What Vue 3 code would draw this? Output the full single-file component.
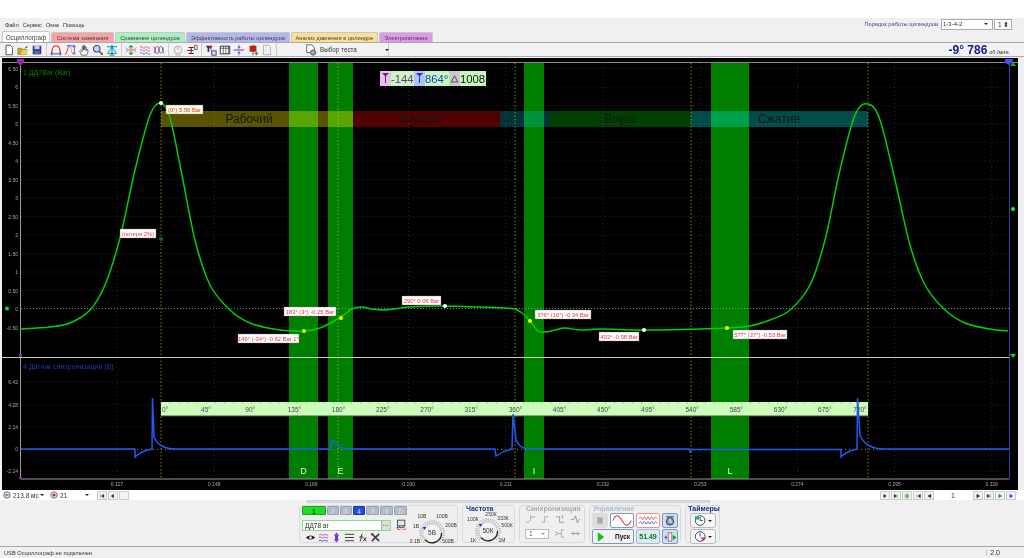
<script setup>
const curvePts = [[21,329],[50,327],[70,323],[90,310],[105,285],[120,238],[135,170],[150,115],[161,103],[170,118],[180,165],[195,240],[210,285],[230,310],[250,323],[280,330],[304,331],[320,328],[341,317],[352,309],[362,307],[372,309],[385,310],[410,307],[445,306],[480,307],[505,308],[515,309],[522,313],[530,321],[538,331],[545,332],[555,330],[565,328],[580,330],[600,329],[644,330],[700,329],[727,328],[750,326],[770,320],[790,310],[810,285],[825,240],[840,170],[855,115],[868,104],[880,120],[895,180],[910,245],[925,285],[945,310],[965,323],[990,329],[1008,331]]
function smooth(p) {
  let d = `M${p[0][0]} ${p[0][1]}`
  for (let i = 0; i < p.length - 1; i++) {
    const a = p[Math.max(i - 1, 0)], b = p[i], c = p[i + 1], e = p[Math.min(i + 2, p.length - 1)]
    d += ` C${(b[0] + (c[0] - a[0]) / 6).toFixed(1)} ${(b[1] + (c[1] - a[1]) / 6).toFixed(1)} ${(c[0] - (e[0] - b[0]) / 6).toFixed(1)} ${(c[1] - (e[1] - b[1]) / 6).toFixed(1)} ${c[0]} ${c[1]}`
  }
  return d
}
const greenPath = smooth(curvePts)
const bluePath = 'M21 449H135V457Q141 451 152 449L152.5 398L154 437Q157 444 162 446Q167 449 176 449H331L332 440Q337 446 345 449H495L496 456Q503 451 512 449L513 414L516 440Q519 447 526 449H689L690 452L692 449.5H841V457Q847 451 857 449L857.5 398L860 435Q864 444 870 446Q875 449 884 449H1009'

const bands = [[289,29,'D'],[328,25,'E'],[524,20,'I'],[711,38,'L']]
const strokes = [
  { x:161, w:192, c:'#ffec00', o:.35 },
  { x:353, w:147, c:'#e00000', o:.36 },
  { x:500, w:49, c:'#00c8e0', o:.26 },
  { x:549, w:142, c:'#00d000', o:.3 },
  { x:691, w:177, c:'#00e0d8', o:.34 }
]
const strokeLabels = [['Рабочий',249],['Выпуск',420],['Впуск',620],['Сжатие',779]]
const yTop = [['6.50',68.5],['6',87],['5.50',105.5],['5',124],['4.50',142.5],['4',161],['3.50',179.5],['3',198],['2.50',216.5],['2',235],['1.50',253.5],['1',272],['0.50',290.5],['0',309],['-0.50',327.5]]
const yBot = [['6.42',382],['4.28',405],['2.14',427],['0',449],['-2.14',471]]
const times = ['0.127','0.148','0.169','0.190','0.211','0.232','0.253','0.274','0.295','0.316'].map((t,i)=>[t,117+97.2*i])
const yellow = [161,338,515,691,868]
const degs = Array.from({length:15},(_,i)=>[`${45*(i+1)}°`,206+44.2*i])
const minor = Array.from({length:78},(_,i)=>161+9.07*i)
const notes = [
  ['(0°) 5.56 Bar',166,105,37,'#fffde0'],['(потери 2%)',120,229,36,'#fff'],['183° (3°) -0.25 Bar',284,307,52,'#fff'],
  ['146° (-34°) -0.62 Bar 1°',238,334,61,'#fff'],['290° 0.06 Bar',402,296,39,'#fff'],['376° (16°) -0.34 Bar',535,310,56,'#fff'],
  ['493° -0.58 Bar',599,332,40,'#fff'],['577° (37°) -0.53 Bar',733,330,54,'#fff']
]
const dots = [[161,103,'#fff'],[161,239,'#0a6a0a'],[304,331,'#ff0'],[341,318,'#ff0'],[445,306,'#fff'],[530,321,'#ff0'],[644,330,'#fff'],[727,328,'#ff0']]

const tabs = [['Осциллограф','#fff',48],['Система зажигания','#f5a3a3',63],['Сравнение цилиндров','#a9efc0',70],['Эффективность работы цилиндров','#b3b5ef',104],['Анализ давления в цилиндре','#fbdf95',87],['Электропитание','#df98ee',54]]

const toolGroups = [
 ['<path d="M3.5 1.5h5l2.5 2.5v8.500h-7.500z" fill="#fff" stroke="#444"/>',
  '<path d="M1 5h4l1 1h5v6H1z" fill="#c9a227" stroke="#7a6000" stroke-width=".6"/><path d="M4 12l2-5h7l-2 5z" fill="#ecd060"/><path d="M9 5l2-3 1.500 2.500z" fill="#20a020"/>',
  '<path d="M2 2h10v10H2z" fill="#2b3f8f"/><path d="M4 2h6v4H4z" fill="#c8d0e8"/><path d="M4 8h6v4H4z" fill="#5b6aa8"/>'],
 ['<path d="M2 11C2 5 4 2 7 2s5 3 5 9" fill="none" stroke="#e01818" stroke-width="1.200"/><path d="M1 11.500h12M1 11.500l2-1.500M1 11.500l2 1.500M13 11.500l-2-1.500M13 11.500l-2 1.500" stroke="#1838c8" fill="none"/>',
  '<path d="M1 12C4 12 4 2 7 2" fill="none" stroke="#e01818"/><path d="M7 2c2 0 1 10 4 10" fill="none" stroke="#f09090"/><path d="M12 2v10M3 2h9M10 4l2-2 2 2M10 10l2 2 2-2" stroke="#1838c8" fill="none" stroke-width=".8"/>',
  '<path d="M4 13L2 8l1-1 2 2V2.500h1.500V7V2h1.500v5-3.500h1.500V8l1-2 1 .5V10l-1.500 3z" fill="#fff" stroke="#333" stroke-width=".8"/>',
  '<circle cx="5.500" cy="5.500" r="3.800" fill="#bcd8f5" stroke="#3a4f8a" stroke-width="1.300"/><path d="M8.500 8.500l4 4" stroke="#7a5a20" stroke-width="2"/>',
  '<path d="M1 3h12M1 11h12" stroke="#1fb0a0" stroke-width="1.400"/><path d="M2 9C5 9 5 4 7 4s2 5 5 5" fill="none" stroke="#18c8d8" stroke-width="1.300"/><path d="M7 1v12" stroke="#1838c8"/><path d="M4 13h6" stroke="#20c020" stroke-width="1.300"/>'],
 ['<path d="M7 1l3 3H4zM7 13l3-3H4z" fill="#309030"/><path d="M2 7h10" stroke="#e05050"/><circle cx="7" cy="7" r="2.500" fill="#e8a0a0"/><path d="M1 4l2 3-2 3M13 4l-2 3 2 3" stroke="#80a0c0" fill="none"/>',
  '<path d="M1 4c2-3 4 3 6 0s4 3 6 0M1 7.500c2-3 4 3 6 0s4 3 6 0" fill="none" stroke="#e04040"/><path d="M1 11c2-3 4 3 6 0s4 3 6 0" fill="none" stroke="#3060e0"/>',
  '<path d="M2 11C2 1 7 1 7 7s5 4 5-3" fill="none" stroke="#e04040" stroke-width="1.100"/><path d="M2 3c0 10 5 10 5 4s5-6 5 4" fill="none" stroke="#3060e0" stroke-width="1.100"/>'],
 ['<circle cx="7" cy="7" r="4.500" fill="#eee" stroke="#aaa"/><path d="M4 13h6M7 2v5" stroke="#aaa"/>',
  '<path d="M6 4v7M3 4h6M3 11h6" stroke="#a00" stroke-width="1.200"/><path d="M1 7.500h8" stroke="#333"/><path d="M10 1.500h3v5h-3z" fill="none" stroke="#333" stroke-width=".8"/>'],
 ['<path d="M1 2l6 0-2 3v4H3V5z" fill="#1b2f9f"/><path d="M5 2h4l-1.500 3v4" fill="#d02020"/><rect x="8" y="8" width="5" height="5" fill="#dde" stroke="#1b2f9f"/>',
  '<path d="M1.500 2.500h11v9h-11z" fill="#fff" stroke="#222"/><path d="M1.500 5h11M5 2.500v9M8 2.500v9M11 2.500v9" stroke="#222" stroke-width=".7"/>',
  '<path d="M1 7h12" stroke="#808"/><path d="M7 1v4M5.500 3.500L7 5l1.500-1.500M7 13V9M5.500 10.500L7 9l1.500 1.500" stroke="#205090" fill="none"/>',
  '<path d="M3 2h8v7H3z" fill="#d81818"/><path d="M7 1v12" stroke="#444"/><path d="M9 11h4M11 9v4" stroke="#20a020" stroke-width="1.400"/>',
  '<path d="M3 1.500h6l2 2v9H3z" fill="#f4f4f4" stroke="#aaa"/><path d="M6 3.500v7" stroke="#ccc" stroke-dasharray="1 1"/>']
]
const chanBtns = [['1','on',24],['2','',12],['3','',12],['4','blue',13],['5','',13],['6','',13],['D','',13]]
const chanIcons = [
 '<path d="M1 6c3-3 7-3 10 0-3 3-7 3-10 0z" fill="#222"/><circle cx="6" cy="6" r="1.500" fill="#fff"/>',
 '<path d="M1 3c2-2 3 2 5 0s3 2 5 0M1 6c2-2 3 2 5 0s3 2 5 0" fill="none" stroke="#d040c0"/><path d="M1 9.500c2-2 3 2 5 0s3 2 5 0" fill="none" stroke="#3050d0"/>',
 '<path d="M6 .5l3 3.500H3zM6 11.500L3 8h6z" fill="#b020c0"/><path d="M4.500 4h3v4h-3z" fill="#2040d0"/>',
 '<path d="M1 2.500h10M1 6h10M1 9.500h10" stroke="#333"/>',
 '<path d="M6 2C4 2 5 10 3 10M2.500 5.500h4M7 6l3 4M10 6l-3 4" fill="none" stroke="#222"/>',
 '<path d="M2 2l8 8M10 2L2 10" stroke="#345" stroke-width="1.800"/><circle cx="2.500" cy="2.500" r="1.500" fill="#a33"/>'
]
const syncIcons = [
 '<path d="M1 9h3c2 0 2-6 4-6h3M6 1v4" fill="none" stroke="#aaa"/>',
 '<path d="M2 9h3V3h4" fill="none" stroke="#aaa"/><path d="M8 8l2 2" stroke="#ccc"/>',
 '<path d="M1 3h4v6h5M8 1v4" fill="none" stroke="#999"/>',
 '<path d="M1 6h3l2-4 2 8 2-4h1" fill="none" stroke="#999"/>',
 '<path d="M1 4l4 2-4 2M5 6h3M8 2h3M8 10h3M8 2v8" fill="none" stroke="#aaa"/>',
 '<path d="M1 6h10M3 4l2 2-2 2M9 4L7 6l2 2" fill="none" stroke="#999"/>'
]
const ticks = (cx, cy, r, n) => Array.from({ length: n }, (_, i) => {
  const a = (135 + 270 * i / (n - 1)) * Math.PI / 180
  return `M${(cx + r * Math.cos(a)).toFixed(1)} ${(cy + r * Math.sin(a)).toFixed(1)}L${(cx + (r + 2.5) * Math.cos(a)).toFixed(1)} ${(cy + (r + 2.5) * Math.sin(a)).toFixed(1)}`
}).join('')
const knobA = ticks(25, 27, 10.5, 25)
const knobB = ticks(26, 26, 10.5, 25)
const navL = ['M2 2v6M4 5l4-3v6z','M2 5l4-3v6z']
const navR = [['M3 2l4 3-4 3z','#222'],['M2 2l4 3-4 3zM7 2v6','#222'],['C','#2a2'],['M3 2v6M9 2L5 5l4 3z','#222'],['M8 2L3 5l5 3z','#222']]
const navR2 = [['M3 2l5 3-5 3z','#222'],['M2 2l4 3-4 3zM7 2v6','#222'],['M3 2l5 3-5 3z','#0a9a0a'],['M3 2l5 3-5 3z','#1040f0']]
</script>

<template>
  <div class="app">
    <div class="blank"></div>
    <div class="menubar">
      <div class="menu"><span>Файл</span><span>Сервис</span><span>Окна</span><span>Помощь</span></div>
      <div class="order">
        <span class="order-label">Порядок работы цилиндров</span>
        <div class="sel"><span>1-3-4-2</span><i class="caret"></i></div>
        <div class="spin"><span>1</span><b>⬍</b></div>
      </div>
    </div>
    <div class="tabs">
      <div v-for="(t,i) in tabs" :key="t[0]" class="tab" :class="{active:i===0}" :style="{background:t[1],width:t[2]+'px'}">{{ t[0] }}</div>
    </div>
    <div class="toolbar">
      <div v-for="(g,gi) in toolGroups" :key="gi" class="tgroup">
        <svg v-for="(ic,i) in g" :key="i" class="ti" viewBox="0 0 14 14" v-html="ic"></svg>
      </div>
      <div class="testsel">
        <svg class="ti doc" viewBox="0 0 14 14"><path d="M2 1h6l3 3v6H2z" fill="#fff" stroke="#555"/><circle cx="9.500" cy="10" r="3" fill="#aaa" stroke="#444"/></svg>
        <span>Выбор теста</span><i class="caret"></i>
      </div>
      <div class="rpm"><b>-9° 786</b><small>об./мин.</small></div>
    </div>

    <svg class="plot" viewBox="0 57 1024 433" width="1024" height="433">
      <rect x="0" y="57" width="1024" height="433" fill="#f0f0f0"/>
      <rect x="2" y="58" width="1016" height="432" fill="#000"/>
      <g stroke="#3a3a3a" stroke-width=".7" stroke-dasharray="1 3">
        <line v-for="t in times" :key="t[0]" :x1="t[1]" :x2="t[1]" y1="63" y2="479"/>
        <line v-for="y in yTop" :key="y[0]" x1="21" x2="1009" :y1="y[1]" :y2="y[1]"/>
        <line v-for="y in yBot" :key="y[0]" x1="21" x2="1009" :y1="y[1]" :y2="y[1]"/>
      </g>
      <rect v-for="b in bands" :key="b[2]" :x="b[0]" y="63" :width="b[1]" height="416" fill="#007e00"/>
      <rect v-for="s in strokes" :key="s.x" :x="s.x" y="111" :width="s.w" height="16" :fill="s.c" :fill-opacity="s.o"/>
      <text v-for="s in strokeLabels" :key="s[0]" :x="s[1]" y="123" class="stroke">{{ s[0] }}</text>
      <line x1="21" x2="1009" y1="308.500" y2="308.500" stroke="#9a9a9a" stroke-width=".8" stroke-dasharray="1 2"/>
      <line v-for="x in yellow" :key="x" :x1="x" :x2="x" y1="63" y2="479" stroke="#b8b820" stroke-width=".7" stroke-dasharray="1.500 2"/>
      <rect x="2" y="62" width="1016" height="1" fill="#888"/>
      <rect x="2" y="357" width="1007" height="1" fill="#c8c8c8"/>
      <path d="M20.500 63V479H1009" fill="none" stroke="#9a9a9a"/>
      <rect x="1009" y="63" width="1" height="416" fill="#3838b0"/>
      <path d="M17 59h7v3l-3.500 4-3.500-4z" fill="#a020b0"/>
      <path d="M1005 59h8v2l-4 4-4-2z" fill="#4848ff"/>
      <path d="M1010 66l3-4 3 4z" fill="#00c000"/>
      <path d="M1010 354h6l-3 4z" fill="#00e000"/>
      <circle cx="1013" cy="209" r="2" fill="#00ff30"/>
      <circle cx="7" cy="308.500" r="2" fill="#00e040"/>
      <path d="M19 477h3v2h-3z" fill="#a020b0"/>
      <path d="M19 354h3v3h-3z" fill="#a020b0"/>

      <text v-for="y in yTop" :key="y[0]" x="18" :y="y[1]+2" class="axis" text-anchor="end">{{ y[0] }}</text>
      <text v-for="y in yBot" :key="y[0]" x="18" :y="y[1]+2" class="axis" text-anchor="end">{{ y[0] }}</text>
      <text v-for="t in times" :key="t[0]" :x="t[1]" y="486" class="axis" text-anchor="middle">{{ t[0] }}</text>
      <text x="23" y="74.500" class="ch ch1">1 ДД7Bar (Bar)</text>
      <text x="23" y="369" class="ch ch4">4 Датчик синхронизации (В)</text>

      <rect x="161" y="402" width="707" height="14" fill="#ccfdba"/>
      <line x1="161" x2="868" y1="416" y2="416" stroke="#3d5a3d"/>
      <line v-for="x in minor" :key="x" :x1="x" :x2="x" y1="402" y2="404" stroke="#8aa080" stroke-width=".5"/>
      <text x="162" y="412" class="deg">0°</text>
      <text v-for="d in degs" :key="d[0]" :x="d[1]" y="412" class="deg" text-anchor="middle">{{ d[0] }}</text>
      <text x="860" y="412" class="deg" text-anchor="middle">720°</text>

      <text v-for="b in bands" :key="b[2]" :x="b[0]+b[1]/2" y="473.500" class="bandl">{{ b[2] }}</text>
      <line x1="21" x2="1009" y1="449.500" y2="449.500" stroke="#cfd8ff" stroke-width=".5" stroke-dasharray="1 3"/>
      <path :d="bluePath" fill="none" stroke="#1f5af0" stroke-width="1.500"/>
      <path :d="greenPath" fill="none" stroke="#00d000" stroke-width="1.500"/>

      <circle v-for="d in dots" :key="d[0]+'-'+d[1]" :cx="d[0]" :cy="d[1]" r="2" :fill="d[2]"/>
      <g v-for="n in notes" :key="n[0]">
        <rect :x="n[1]" :y="n[2]" :width="n[3]" height="9" :fill="n[4]" stroke="#777" stroke-width=".4"/>
        <text :x="n[1]+n[3]/2" :y="n[2]+6.800" class="note" text-anchor="middle">{{ n[0] }}</text>
      </g>

      <rect x="380" y="71" width="106" height="15" fill="#c8f5c0"/>
      <rect x="380" y="71" width="11" height="15" fill="#e3c3e6"/>
      <rect x="414" y="71" width="11" height="15" fill="#b4c0fa"/>
      <rect x="449" y="71" width="11" height="15" fill="#c9c9c9"/>
      <path d="M382 73h7l-3 3v7h-1v-7z" fill="#7a1a8a"/>
      <path d="M416 73h7l-3 3v7h-1v-7z" fill="#1a3ab8"/>
      <path d="M454.500 75l4 7.500h-8zM454.500 77l-2.500 4.500h5z" fill-rule="evenodd" fill="#555"/>
      <text x="391" y="83" class="cur" fill="#7b2d8b">-144</text>
      <text x="425" y="83" class="cur" fill="#1a3cc0">864°</text>
      <text x="460" y="83" class="cur" fill="#111">1008</text>
    </svg>

    <div class="nav">
      <div class="nav-left">
        <svg class="nv" viewBox="0 0 10 10"><circle cx="5" cy="5" r="4" fill="#dde" stroke="#556"/><path d="M3 5h4" stroke="#226"/></svg>
        <span class="val w1">213.8 мс</span><i class="caret"></i>
        <svg class="nv rec" viewBox="0 0 10 10"><circle cx="5" cy="5" r="4" fill="#eee" stroke="#556"/><circle cx="5" cy="5" r="2" fill="#c22"/></svg>
        <span class="val w2">21</span><i class="caret"></i>
        <button v-for="p in navL" :key="p" class="nb"><svg viewBox="0 0 10 10"><path :d="p" fill="#222" stroke="#222" stroke-width=".6"/></svg></button>
        <button class="nb"></button>
      </div>
      <div class="nav-right">
        <template v-for="(p,i) in navR" :key="i">
          <button class="nb"><svg viewBox="0 0 10 10"><circle v-if="p[0]==='C'" cx="5" cy="5" r="3.500" fill="#dfd" stroke="#282"/><circle v-if="p[0]==='C'" cx="5" cy="5" r="1.800" fill="#2a2"/><path v-else :d="p[0]" :fill="p[1]" :stroke="p[1]" stroke-width=".6"/></svg></button>
        </template>
        <span class="page">1</span>
        <button v-for="(p,i) in navR2" :key="'r'+i" class="nb"><svg viewBox="0 0 10 10"><path :d="p[0]" :fill="p[1]" :stroke="p[1]" stroke-width=".6"/></svg></button>
      </div>
    </div>

    <div class="panel">
      <div class="slider"><i></i><i class="end"></i></div>
      <div class="groups">
        <div class="group g1">
          <div class="g1-left">
            <div class="chans">
              <div v-for="c in chanBtns" :key="c[0]" class="chan" :class="c[1]" :style="{width:c[2]+'px'}">{{ c[0] }}</div>
            </div>
            <div class="inrow">
              <div class="input"><span>ДД78 ar</span><i>…</i></div>
              <svg class="ico" viewBox="0 0 14 14"><rect x="2" y="1" width="9" height="7" fill="#e6e6e6" stroke="#333"/><path d="M4 8v2h6V8" stroke="#333" fill="none"/><path d="M1 11c2 2 3 2 5 1M13 11c-2 2-3 2-5 1" stroke="#d02020" fill="none"/><circle cx="2" cy="10" r="1.200" fill="#2040d0"/></svg>
            </div>
            <div class="chicons">
              <svg v-for="(ic,i) in chanIcons" :key="i" class="cico" viewBox="0 0 12 12" v-html="ic"></svg>
            </div>
          </div>
          <svg class="knob" viewBox="0 0 50 38" width="50" height="38">
            <path :d="knobA" stroke="#888" stroke-width=".6"/>
            <circle cx="25" cy="27" r="9.500" fill="#f3f3f3" stroke="#ccc" stroke-width="1.500"/>
            <path d="M18 33.700A9.500 9.500 0 0 0 34.500 27" fill="none" stroke="#222" stroke-width="1.200"/>
            <path d="M15.500 21h4l-2 3z" fill="#2040e0"/>
            <text x="25" y="29" text-anchor="middle" class="kv">5В</text>
            <text x="15" y="12" text-anchor="middle">10В</text><text x="35" y="12" text-anchor="middle">100В</text>
            <text x="9" y="22" text-anchor="middle">1В</text><text x="44" y="21" text-anchor="middle">200В</text>
            <text x="8" y="37" text-anchor="middle">0.1В</text><text x="41" y="37" text-anchor="middle">500В</text>
          </svg>
        </div>
        <div class="group g2">
          <div class="title blue">Частота</div>
          <svg class="knob over" viewBox="0 0 53 38" width="53" height="38">
            <path :d="knobB" stroke="#888" stroke-width=".6"/>
            <circle cx="26" cy="26" r="9.500" fill="#f3f3f3" stroke="#ccc" stroke-width="1.500"/>
            <path d="M19 32.700A9.500 9.500 0 0 0 35.500 26" fill="none" stroke="#222" stroke-width="1.200"/>
            <path d="M16.500 19h4l-2 3z" fill="#2040e0"/>
            <text x="26" y="28" text-anchor="middle" class="kv">50К</text>
            <text x="29" y="11" text-anchor="middle">250К</text><text x="11" y="16" text-anchor="middle">100К</text>
            <text x="41" y="15" text-anchor="middle">333К</text><text x="45" y="22" text-anchor="middle">500К</text>
            <text x="11" y="37" text-anchor="middle">1К</text><text x="40" y="37" text-anchor="middle">1М</text>
          </svg>
        </div>
        <div class="group g3">
          <div class="title gray">Синхронизация</div>
          <div class="syncs">
            <svg v-for="i in 4" :key="i" class="sic" viewBox="0 0 12 12" v-html="syncIcons[i-1]"></svg>
          </div>
          <div class="syncs second">
            <div class="mini"><span>1</span><i class="caret light"></i></div>
            <svg class="sic" viewBox="0 0 12 12" v-html="syncIcons[4]"></svg>
            <svg class="sic" viewBox="0 0 12 12" v-html="syncIcons[5]"></svg>
          </div>
        </div>
        <div class="group g4">
          <div class="title pale">Управление</div>
          <div class="ctl">
            <div class="cb pause"><svg viewBox="0 0 12 12"><path d="M4 2.500v7M6 2.500v7M8 2.500v7" stroke="#777"/></svg></div>
            <div class="cb sine"><svg viewBox="0 0 22 12"><path d="M1 6C4-1 7-1 11 6s7 7 10 0" fill="none" stroke="#e03030" stroke-width="1.100"/></svg></div>
            <div class="cb zig"><svg viewBox="0 0 22 12"><path d="M1 4l2-2 2 3 2-3 2 3 2-3 2 3 2-3 2 3 2-3 2 2" fill="none" stroke="#e03030" stroke-width=".8"/><path d="M1 9l2-2 2 3 2-3 2 3 2-3 2 3 2-3 2 3 2-3 2 2" fill="none" stroke="#3040d0" stroke-width=".8"/></svg></div>
            <div class="cb small"><svg viewBox="0 0 14 12"><rect x="3" y="1" width="8" height="2" fill="#777"/><circle cx="7" cy="7" r="4" fill="#8ab" stroke="#235"/><path d="M7 4v3l2 1" stroke="#fff" fill="none"/></svg></div>
            <div class="cb start"><svg viewBox="0 0 10 14"><path d="M1 1l8 6-8 6z" fill="#10c020"/></svg><b>Пуск</b></div>
            <div class="cb num"><b>51.49</b></div>
            <div class="cb small"><svg viewBox="0 0 14 12"><rect x="5" y="2" width="4" height="9" fill="#eee" stroke="#a33" stroke-width=".7"/><path d="M1 7h3" stroke="#2040d0"/><path d="M2.500 5v4" stroke="#2040d0"/><path d="M10 4l4 3-4 3z" fill="#10a020"/></svg></div>
          </div>
        </div>
        <div class="group g5">
          <div class="title navy">Таймеры</div>
          <div class="timer"><svg viewBox="0 0 16 14"><circle cx="7" cy="7" r="5.500" fill="#fff" stroke="#333"/><path d="M7 3v4h3" stroke="#333" fill="none"/><path d="M1 2h5v4H1z" fill="#20b0a0"/></svg><i class="caret"></i></div>
          <div class="timer"><svg viewBox="0 0 16 14"><circle cx="7" cy="7" r="5.500" fill="#fff" stroke="#333"/><path d="M7 3v4" stroke="#333"/><path d="M7 8h7l-3 4z" fill="#e020b0"/></svg><i class="caret"></i></div>
        </div>
      </div>
    </div>

    <div class="status">
      <span>USB Осциллограф не подключен</span>
      <span class="ver">2.0</span>
    </div>
  </div>
</template>

<style scoped>
.app { width: 1024px; height: 558px; overflow: hidden; display: flex; flex-direction: column; background: #f0f0f0; font-family: "Liberation Sans", Arial, sans-serif; font-size: 6.5px; color: #333; filter: blur(.3px); }
.blank { height: 18px; background: #fff; flex: none; }
.menubar { height: 13px; flex: none; display: flex; justify-content: space-between; align-items: flex-start; }
.menu { display: flex; gap: 4px; padding: 4px 0 0 5px; line-height: 7px; font-size: 5.600px; }
.order { display: flex; align-items: center; padding-right: 12px; height: 12px; }
.order-label { color: #3a4a8a; margin-right: 3px; font-size: 5.700px; }
.sel { width: 52px; height: 11px; background: #fff; border: 1px solid #aaa; box-sizing: border-box; display: flex; justify-content: space-between; align-items: center; padding: 0 4px 0 1px; font-size: 6px; }
.spin { width: 18px; height: 11px; margin-left: 1px; background: #fff; border: 1px solid #aaa; box-sizing: border-box; display: flex; justify-content: space-between; align-items: center; padding: 0 2px 0 3px; }
.spin b { font-size: 7px; font-weight: normal; line-height: 7px; }
.caret { display: inline-block; width: 0; height: 0; border: 2px solid transparent; border-top: 2.5px solid #222; border-bottom: 0; flex: none; }
.caret.light { border-top-color: #999; }
.tabs { height: 12px; flex: none; display: flex; gap: 1px; padding-left: 2px; align-items: flex-end; }
.tab { height: 11px; line-height: 11px; text-align: center; box-sizing: border-box; border-radius: 2px 2px 0 0; white-space: nowrap; font-size: 5.700px; border: 1px solid #c8c8c8; border-bottom: 0; color: #444; }
.tab.active { height: 12px; line-height: 12px; font-size: 6.300px; }
.toolbar { height: 15px; flex: none; box-sizing: border-box; display: flex; align-items: center; padding-left: 2px; border-top: 1px solid #aaa; border-bottom: 1px solid #aaa; background: #f2f2f2; margin-top: -1px; }
.tgroup { display: flex; padding: 0 2px 0 0; margin-right: 2px; border-right: 1px solid #ccc; height: 13px; align-items: center; }
.ti { width: 12px; height: 12px; margin: 0 1px; flex: none; }
.testsel { width: 112px; height: 13px; border-right: 1px solid #ccc; display: flex; align-items: center; padding-left: 27px; box-sizing: border-box; gap: 2px; margin-left: -2px; white-space: nowrap; font-size: 6.300px; }
.testsel .caret { margin-left: 26px; }
.rpm { margin-left: auto; padding-right: 14px; color: #17208a; display: flex; align-items: baseline; gap: 2px; }
.rpm b { font-size: 12px; }
.rpm small { font-size: 5.500px; color: #333; }
.plot { display: block; flex: none; }
.plot text { font-family: "Liberation Sans", Arial, sans-serif; }
.axis { font-size: 5px; fill: #a8a8a8; }
.stroke { font-size: 12px; fill: #171717; text-anchor: middle; }
.ch { font-size: 7px; }
.ch1 { fill: #008a00; }
.ch4 { fill: #2038b8; }
.deg { font-size: 6.500px; fill: #444; }
.bandl { font-size: 9px; fill: #d8f8d8; text-anchor: middle; }
.note { font-size: 5.800px; fill: #f03040; }
.cur { font-size: 11.300px; }
.nav { height: 10px; flex: none; background: #fff; display: flex; justify-content: space-between; align-items: center; padding: 0 8px 0 3px; font-size: 6.500px; }
.nav-left, .nav-right { display: flex; align-items: center; }
.nv { width: 8px; height: 8px; flex: none; margin-right: 2px; }
.rec { margin-left: 6px; }
.val.w1 { width: 27px; }
.val.w2 { width: 25px; }
.nb { width: 10px; height: 9px; padding: 1px; margin: 0 .5px; border: 1px solid #ccc; background: #f3f3f3; box-sizing: border-box; display: block; }
.nb svg { display: block; width: 6px; height: 6px; }
.nav-left .nb:first-of-type { margin-left: 8px; }
.page { width: 38px; text-align: center; font-size: 7px; }
.panel { height: 45px; flex: none; padding-left: 299px; box-sizing: border-box; }
.slider { width: 403px; height: 3px; margin: 0 0 2px 8px; border: 1px solid #d5d5d5; box-sizing: border-box; background: repeating-linear-gradient(90deg, #a9c3ee 0 1px, transparent 1px 2px); position: relative; }
.groups { display: flex; gap: 4px; height: 38px; }
.group { border: 1px solid #dcdcdc; border-radius: 3px; box-sizing: border-box; position: relative; background: #efefef; }
.g1 { width: 159px; display: flex; justify-content: space-between; }
.g1-left { width: 107px; padding: 0 0 0 2px; box-sizing: border-box; }
.chans { display: flex; gap: 1px; height: 10px; }
.chan { height: 9px; line-height: 9px; text-align: center; background: #b5bcc4; color: #dde; border: 1px solid #8ea5bd; box-sizing: border-box; font-size: 6.500px; border-radius: 1px; }
.chan.on { background: #1ee01e; color: #063; border-color: #2a9a2a; font-weight: bold; }
.chan.blue { background: #1c4fe0; color: #dde; border-color: #1c3c90; }
.inrow { display: flex; align-items: center; gap: 5px; margin-top: 3px; }
.input { width: 94px; height: 11px; background: #fff; border: 1px solid #86df86; box-sizing: border-box; display: flex; justify-content: space-between; padding-left: 2px; line-height: 9px; color: #222; }
.input i { width: 8px; background: #ddd; border-left: 1px solid #aaa; text-align: center; font-style: normal; line-height: 6px; }
.ico { width: 12px; height: 12px; }
.chicons { display: flex; gap: 2px; padding-left: 3px; margin-top: 1px; }
.cico { width: 11px; height: 11px; }
.knob { flex: none; display: block; }
.knob text { font-size: 5px; fill: #333; font-family: "Liberation Sans", Arial, sans-serif; }
.knob .kv { font-size: 6.500px; }
.knob.over { position: absolute; left: -1px; top: -1px; }
.g2 { width: 53px; }
.g3 { width: 66px; padding: 0 3px; }
.g4 { width: 92px; }
.g5 { width: 35px; display: flex; flex-direction: column; align-items: center; }
.title { font-size: 7px; font-weight: bold; line-height: 6px; padding: 0 0 0 3px; white-space: nowrap; position: relative; z-index: 1; height: 5px; }
.blue { color: #22308a; }
.gray { color: #aaa; }
.pale { color: #a9bad0; }
.navy { color: #1a2a90; }
.syncs { display: flex; justify-content: space-between; margin-top: 3px; height: 11px; padding-left: 2px; }
.syncs.second { margin-top: 3px; align-items: center; }
.sic { width: 11px; height: 11px; }
.mini { width: 24px; height: 10px; border: 1px solid #bbb; background: #fff; box-sizing: border-box; display: flex; justify-content: space-between; align-items: center; padding: 0 3px; color: #666; }
.ctl { display: grid; grid-template-columns: 16px 24px 24px 16px; grid-template-rows: 15px 15px; gap: 1px 2px; margin: 2px 0 0 2px; }
.cb { border: 1px solid #a5b9c9; border-radius: 2px; box-sizing: border-box; background: #f2f2f2; display: flex; align-items: center; justify-content: center; min-width: 0; }
.cb svg { width: 100%; height: 11px; }
.pause { background: #ddd; border-color: #ddd; }
.sine { border: 1px solid #7a9cbc; background: #fff; }
.zig { border: 1px solid #f09090; background: #fff; }
.small { background: #cfdff0; border-color: #7a9cbc; }
.start { grid-column: span 2; justify-content: flex-start; padding-left: 4px; border-color: #7a9cbc; }
.start svg { width: 8px; height: 12px; flex: none; }
.start b { font-size: 6.500px; margin-left: 10px; color: #111; }
.num { background: #d9eaf6; color: #0a7a0a; }
.num b { font-size: 7px; }
.timer { width: 26px; height: 15px; margin-top: 2px; border: 1px solid #bbb; border-radius: 3px; box-sizing: border-box; display: flex; align-items: center; justify-content: space-between; padding: 0 3px; background: #f5f5f5; }
.timer + .timer { margin-top: 1px; }
.timer svg { width: 14px; height: 13px; }
.status { flex: 1; border-top: 1px solid #a8a8a8; display: flex; justify-content: space-between; align-items: center; padding: 0 24px 0 4px; margin-top: 1px; font-size: 5.700px; }
.ver { border-left: 1px solid #ccc; padding-left: 3px; font-size: 7px; }
</style>
